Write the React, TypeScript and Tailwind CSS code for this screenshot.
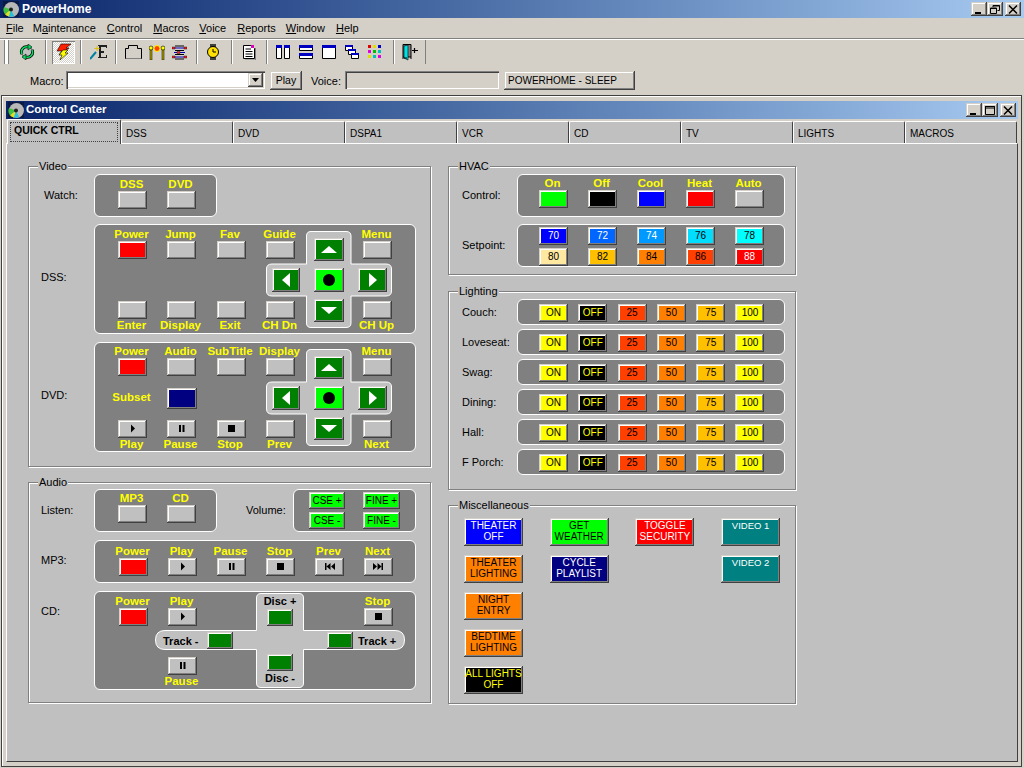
import type { ReactNode } from "react";

const raised =
  "shadow-[inset_-1px_-1px_0_#404040,inset_1px_1px_0_#d4d0c8,inset_-2px_-2px_0_#808080,inset_2px_2px_0_#fff]";
const sunken =
  "shadow-[inset_1px_1px_0_#808080,inset_2px_2px_0_#404040,inset_-1px_-1px_0_#fff,inset_-2px_-2px_0_#d4d0c8]";
const gray = "h-[18px] w-[29px] bg-[#c0c0c0]";
const red = "h-[18px] w-[29px] bg-[#ff0000]";
const green = "h-[24px] w-[29px] bg-[#008000]";
const panel = "rounded-[6px] border border-white bg-[#808080]";

function Btn({ className, children }: { className: string; children?: ReactNode }) {
  return (
    <button className={`flex shrink-0 items-center justify-center ${raised} ${className}`}>
      {children}
    </button>
  );
}

function Top({ label, children }: { label: string; children: ReactNode }) {
  return (
    <div className="flex flex-col items-center">
      <span className="h-[14px] whitespace-nowrap pr-[2px] text-[11.5px] font-bold leading-[14px] text-[#ffff00]">
        {label}
      </span>
      {children}
    </div>
  );
}

function Under({ label, children }: { label: string; children: ReactNode }) {
  return (
    <div className="flex flex-col items-center">
      {children}
      <span className="mt-[-1px] h-[14px] whitespace-nowrap pr-[2px] text-[11.5px] font-bold leading-[14px] text-[#ffff00]">
        {label}
      </span>
    </div>
  );
}

function Group({ title, className, children }: { title: string; className: string; children: ReactNode }) {
  return (
    <fieldset className={`relative min-w-0 border border-[#808080] shadow-[1px_1px_0_#fff,inset_1px_1px_0_#fff] ${className}`}>
      <span className="absolute left-[9px] top-[-8px] bg-[#c0c0c0] px-[1px] leading-[14px]">{title}</span>
      {children}
    </fieldset>
  );
}

function Glyph({ d }: { d: string }) {
  return (
    <svg width="13" height="9" viewBox="0 0 13 9" className="mt-[-1px]">
      <path d={d} fill="#000" />
    </svg>
  );
}
const playG = "M5 0.5 L9 4.5 L5 8.5 Z";
const pauseG = "M4 1H6V8H4ZM7.5 1H9.5V8H7.5Z";
const stopG = "M3 1H10V8H3Z";
const prevG = "M2 1H3.5V8H2ZM7.5 1V8L3.5 4.5ZM12 1V8L8 4.5Z";
const nextG = "M1 1L5 4.5L1 8ZM5.5 1L9.5 4.5L5.5 8ZM9.5 1H11V8H9.5Z";

function Pad() {
  return (
    <div className="absolute left-[171px] top-[6px] h-[97px] w-[126px]">
      <svg width="126" height="97" viewBox="0 0 126 97" className="absolute inset-0">
        <path
          d="M45 .5H80Q85 .5 85 5V33H120Q125.5 33 125.5 38V60Q125.5 65 120 65H85V92Q85 96.5 80 96.5H45Q40.5 96.5 40.5 92V65H6Q.5 65 .5 60V38Q.5 33 6 33H40.5V5Q40.5 .5 45 .5Z"
          fill="#c0c0c0"
          stroke="#fff"
        />
      </svg>
      <div className="relative grid grid-cols-[28px_30px_29px] grid-rows-[23px_24px_23px] gap-x-[14px] gap-y-[7px] pl-[6px] pt-[7px]">
        <Btn className="col-start-2 h-[23px] w-[30px] bg-[#008000]">
          <svg width="16" height="7" viewBox="0 0 16 7"><path d="M8 0L16 7H0Z" fill="#fff" /></svg>
        </Btn>
        <Btn className="col-start-1 row-start-2 h-[24px] w-[28px] bg-[#008000]">
          <svg width="8" height="14" viewBox="0 0 8 14"><path d="M8 0V14L0 7Z" fill="#fff" /></svg>
        </Btn>
        <Btn className="col-start-2 row-start-2 h-[24px] w-[30px] bg-[#00ff00]">
          <span className="size-[12px] rounded-full bg-black" />
        </Btn>
        <Btn className={`col-start-3 row-start-2 ${green}`}>
          <svg width="8" height="14" viewBox="0 0 8 14"><path d="M0 0V14L8 7Z" fill="#fff" /></svg>
        </Btn>
        <Btn className="col-start-2 row-start-3 h-[23px] w-[30px] bg-[#008000]">
          <svg width="16" height="7" viewBox="0 0 16 7"><path d="M0 0H16L8 7Z" fill="#fff" /></svg>
        </Btn>
      </div>
    </div>
  );
}

function DiscPad() {
  const disc = "h-[17px] w-[26px] bg-[#008000]";
  const text = "text-[11px] font-bold leading-[14px] whitespace-nowrap";
  return (
    <div className="absolute left-[60px] top-[1px] h-[95px] w-[250px]">
      <svg width="250" height="95" viewBox="0 0 250 95" className="absolute inset-0">
        <path
          d="M106 .5H144Q148.5 .5 148.5 5V37.5H240Q249.5 37.5 249.5 47Q249.5 56.5 240 56.5H148.5V90Q148.5 94.5 144 94.5H106Q101.5 94.5 101.5 90V56.5H10Q.5 56.5 .5 47Q.5 37.5 10 37.5H101.5V5Q101.5 .5 106 .5Z"
          fill="#c0c0c0"
          stroke="#fff"
        />
      </svg>
      <div className="relative flex flex-col pt-[1px]">
        <div className="ml-[101px] flex w-[48px] flex-col items-center">
          <span className={text}>Disc +</span>
          <div className="h-[1px]" />
          <Btn className={disc} />
        </div>
        <div className="mt-[6px] flex items-center pl-[8px]">
          <span className={`w-[44px] ${text}`}>Track -</span>
          <Btn className={disc} />
          <div className="w-[94px]" />
          <Btn className={disc} />
          <span className={`ml-[5px] ${text}`}>Track +</span>
        </div>
        <div className="ml-[101px] mt-[5px] flex w-[48px] flex-col items-center">
          <Btn className={disc} />
          <span className={text}>Disc -</span>
        </div>
      </div>
    </div>
  );
}

function Disc({ size = 16 }: { size?: number }) {
  return (
    <svg width={size} height={size} viewBox="0 0 16 16">
      <rect width="16" height="16" fill="#0a1a40" />
      <circle cx="8.500" cy="8.500" r="7.500" fill="#b8b8b8" />
      <path d="M8 8.500L2 13.500A7.500 7.500 0 0 1 1 6Z" fill="#40c040" />
      <path d="M8 8.500L6 15.500A7.500 7.500 0 0 1 2 13.500Z" fill="#e0e020" />
      <path d="M8 8.500L11 15A7.500 7.500 0 0 1 6 15.500Z" fill="#20c0e0" />
      <circle cx="8" cy="8.500" r="2" fill="#202020" />
    </svg>
  );
}

function Tool({ children }: { children: ReactNode }) {
  return <span className="flex w-[23px] shrink-0 items-center justify-center">{children}</span>;
}

function Sep() {
  return <span className="h-[24px] w-[2px] shrink-0 border-l border-r border-l-[#808080] border-r-white" />;
}

function Toolbar() {
  return (
    <div className="flex h-[24px] items-center pl-[4px]">
      <span className="h-[24px] w-[5px] border-x border-x-[#808080] bg-white" />
      <div className="flex w-[36px] justify-center">
        <Tool>
          <svg width="16" height="16" viewBox="0 0 16 16">
            <circle cx="8" cy="8" r="5.500" fill="#c0c0c0" stroke="#404040" />
            <path d="M3 10A5 5 0 0 1 9 3" fill="none" stroke="#000" strokeWidth="3" />
            <path d="M3 10A5 5 0 0 1 9 3" fill="none" stroke="#00e060" strokeWidth="1.500" />
            <path d="M13 6A5 5 0 0 1 7 13" fill="none" stroke="#000" strokeWidth="3" />
            <path d="M13 6A5 5 0 0 1 7 13" fill="none" stroke="#00e060" strokeWidth="1.500" />
            <path d="M9 0V6L13 3ZM7 10V16L3 13Z" fill="#00e060" stroke="#000" strokeWidth=".6" />
          </svg>
        </Tool>
      </div>
      <Sep />
      <div className="flex w-[33px] justify-center">
        <span className="flex h-[23px] w-[23px] items-center justify-center bg-[repeating-conic-gradient(#fff_0_25%,#d4d0c8_0_50%)] bg-[length:2px_2px] shadow-[inset_1px_1px_0_#808080,inset_-1px_-1px_0_#fff]">
          <svg width="16" height="18" viewBox="0 0 16 18">
            <path d="M5 1H15L10 5H13L3 12L6 8H1Z" fill="#ff2000" stroke="#000" strokeWidth=".6" />
            <path d="M7 7H12L9 10H12L4 17L6 12H3Z" fill="#ffff00" stroke="#000" strokeWidth=".6" />
          </svg>
        </span>
      </div>
      <Sep />
      <div className="flex w-[33px] justify-center">
        <Tool>
          <svg width="18" height="16" viewBox="0 0 18 16">
            <path d="M8 1H17V4H16V3H11V7H14V9H11V13H16V11H17V14H8V13H9V2H8Z" fill="#202020" />
            <path d="M0 15L6 8" stroke="#0080a0" strokeWidth="2" />
            <path d="M7 2V7M4.500 4.500H9.500" stroke="#e0c000" />
          </svg>
        </Tool>
      </div>
      <Sep />
      <div className="flex w-[79px] justify-center">
        <Tool>
          <svg width="17" height="14" viewBox="0 0 17 14">
            <path d="M.5 13.500V3.500H3.500V.5H12.500V3.500H16.500V13.500Z" fill="#d4d0c8" stroke="#000" />
            <path d="M1 13.500H16" stroke="#808080" />
          </svg>
        </Tool>
        <Tool>
          <svg width="16" height="15" viewBox="0 0 16 15">
            <path d="M1 3H3V15H1ZM13 3H15V15H13Z" fill="#b0a000" stroke="#000" strokeWidth=".5" />
            <circle cx="2" cy="3" r="2" fill="#ffff00" stroke="#000" strokeWidth=".6" />
            <circle cx="14" cy="3" r="2" fill="#ffff00" stroke="#000" strokeWidth=".6" />
            <circle cx="8" cy="3.500" r="3" fill="#ff4000" stroke="#ffff00" />
          </svg>
        </Tool>
        <Tool>
          <svg width="15" height="15" viewBox="0 0 15 15">
            <path d="M2 3H13M2 7.500H13M2 12H13" stroke="#0000c0" strokeWidth="1" />
            <path d="M3 1H12M3 5.500H12M3 9.500H12M3 14H12" stroke="#000" />
            <path d="M0 2H3V4H0ZM12 2H15V4H12ZM0 11H3V13H0ZM12 11H15V13H12ZM5 6.500H8V8.500H5Z" fill="#ff2020" stroke="#000" strokeWidth=".4" />
          </svg>
        </Tool>
      </div>
      <Sep />
      <div className="flex w-[33px] justify-center pr-[3px]">
        <Tool>
          <svg width="14" height="16" viewBox="0 0 14 16">
            <path d="M4 0H10V3H4ZM4 13H10V16H4Z" fill="#404040" />
            <circle cx="7" cy="8" r="5.500" fill="#ffe000" stroke="#000" />
            <path d="M7 5V8H10" stroke="#000" fill="none" />
          </svg>
        </Tool>
      </div>
      <Sep />
      <div className="flex w-[33px] justify-center pr-[1px]">
        <Tool>
          <svg width="13" height="15" viewBox="0 0 13 15">
            <path d="M.5 .5H8.500L11.500 3.500V13.500H.5Z" fill="#fff" stroke="#000" />
            <path d="M2.500 4H8M2.500 6.500H9.500M2.500 9H9.500M2.500 11.500H9.500" stroke="#000" />
            <path d="M8 0H11V3H8Z" fill="#e000c0" />
            <path d="M12.500 3V15H2" stroke="#808080" fill="none" />
          </svg>
        </Tool>
      </div>
      <Sep />
      <div className="flex w-[125px] justify-center pr-[3px]">
        <Tool>
          <svg width="14" height="14" viewBox="0 0 14 14">
            <path d="M.5 .5H5.500V13.500H.5ZM8.500 .5H13.500V13.500H8.500Z" fill="#fff" stroke="#000" />
            <path d="M0 0H6V3H0ZM8 0H14V3H8Z" fill="#0000c0" />
          </svg>
        </Tool>
        <Tool>
          <svg width="14" height="14" viewBox="0 0 14 14">
            <path d="M.5 .5H13.500V5.500H.5ZM.5 8.500H13.500V13.500H.5Z" fill="#fff" stroke="#000" />
            <path d="M0 0H14V3H0ZM0 8H14V11H0Z" fill="#0000c0" />
          </svg>
        </Tool>
        <Tool>
          <svg width="14" height="14" viewBox="0 0 14 14">
            <path d="M.5 .5H13.500V13.500H.5Z" fill="#fff" stroke="#000" />
            <path d="M0 0H14V3H0Z" fill="#0000c0" />
          </svg>
        </Tool>
        <Tool>
          <svg width="14" height="14" viewBox="0 0 14 14">
            <path d="M.5 .5H7.500V5.500H.5ZM3.500 4.500H10.500V9.500H3.500ZM6.500 8.500H13.500V13.500H6.500Z" fill="#fff" stroke="#000" />
            <path d="M0 0H8V2H0ZM3 4H11V6H3ZM6 8H14V10H6Z" fill="#0000c0" />
          </svg>
        </Tool>
        <Tool>
          <svg width="14" height="14" viewBox="0 0 14 14">
            <path d="M0 0H3V3H0Z" fill="#e00000" />
            <path d="M5 0H8V3H5Z" fill="#e0e000" />
            <path d="M10 0H13V3H10Z" fill="#0000c0" />
            <path d="M0 5H3V8H0Z" fill="#e000e0" />
            <path d="M5 5H8V8H5Z" fill="#00c000" />
            <path d="M10 5H13V8H10Z" fill="#00c0c0" />
            <path d="M0 10H3V13H0Z" fill="#e0e000" />
            <path d="M5 10H8V13H5Z" fill="#00c0c0" />
            <path d="M10 10H13V13H10Z" fill="#e000e0" />
          </svg>
        </Tool>
      </div>
      <Sep />
      <div className="flex w-[30px] justify-center pr-[1px]">
        <Tool>
          <svg width="16" height="17" viewBox="0 0 16 17">
            <path d="M1 .5H9V13H1Z" fill="#808080" stroke="#000" />
            <path d="M2 2L6 1V16L2 14Z" fill="#00e0e0" stroke="#000" strokeWidth=".6" />
            <path d="M0 14H5M8 14H10" stroke="#000" />
            <path d="M10 6.500H16M12.500 4V9" stroke="#000" strokeWidth="1.200" />
          </svg>
        </Tool>
      </div>
      <span className="h-[24px] w-px bg-[#808080]" />
    </div>
  );
}

function WinBtn({ kind }: { kind: "min" | "restore" | "max" | "close" }) {
  return (
    <span className={`flex h-[14px] w-[16px] items-center justify-center bg-[#d4d0c8] ${raised}`}>
      <svg width="10" height="9" viewBox="0 0 10 9">
        {kind === "min" && <path d="M1 7H7V9H1Z" fill="#000" />}
        {kind === "max" && <path d="M.5 .5H9.500V8.500H.5ZM0 0H10V2H0Z" fill="none" stroke="#000" />}
        {kind === "restore" && (
          <path d="M3 2V.5H9.500V5.500H7.500M.5 3H6.500V8.500H.5ZM.5 3.500H6.500M3 1H9.500" fill="none" stroke="#000" />
        )}
        {kind === "close" && <path d="M1 .5L9 8.500M9 .5L1 8.500" stroke="#000" strokeWidth="1.500" />}
      </svg>
    </span>
  );
}

const menus = [
  ["", "F", "ile", "mr-[-2px]"],
  ["M", "a", "intenance", ""],
  ["", "C", "ontrol", ""],
  ["", "M", "acros", "mr-[-1px]"],
  ["", "V", "oice", ""],
  ["", "R", "eports", "mr-[-1px]"],
  ["", "W", "indow", ""],
  ["", "H", "elp", ""],
];

const tabs = ["DSS", "DVD", "DSPA1", "VCR", "CD", "TV", "LIGHTS", "MACROS"];

const setpoints = [
  ["70", "bg-[#0000ff] text-white"],
  ["72", "bg-[#0066ff] text-white"],
  ["74", "bg-[#0099ff] text-white"],
  ["76", "bg-[#00ddff] text-black"],
  ["78", "bg-[#00ffff] text-black"],
  ["80", "bg-[#ffe8a0] text-black"],
  ["82", "bg-[#ffc000] text-black"],
  ["84", "bg-[#ff8000] text-black"],
  ["86", "bg-[#ff4000] text-black"],
  ["88", "bg-[#ff0000] text-white"],
];

const levels = [
  ["ON", "bg-[#ffff00] text-black"],
  ["OFF", "bg-black text-[#ffff00]"],
  ["25", "bg-[#ff4000] text-black"],
  ["50", "bg-[#ff8000] text-black"],
  ["75", "bg-[#ffc000] text-black"],
  ["100", "bg-[#ffff00] text-black"],
];

const rooms = ["Couch:", "Loveseat:", "Swag:", "Dining:", "Hall:", "F Porch:"];

const misc = [
  ["THEATER\nOFF", "bg-[#0000ff] text-white"],
  ["GET\nWEATHER", "bg-[#00ff00] text-black"],
  ["TOGGLE\nSECURITY", "bg-[#ff0000] text-white"],
  ["VIDEO 1", "bg-[#008080] text-white items-start pt-[2px] text-[9.5px]"],
  ["THEATER\nLIGHTING", "bg-[#ff8000] text-black"],
  ["CYCLE\nPLAYLIST", "bg-[#000080] text-white"],
  ["VIDEO 2", "col-start-4 bg-[#008080] text-white items-start pt-[2px] text-[9.5px]"],
  ["NIGHT\nENTRY", "col-start-1 bg-[#ff8000] text-black"],
  ["BEDTIME\nLIGHTING", "col-start-1 bg-[#ff8000] text-black"],
  ["ALL LIGHTS\nOFF", "col-start-1 bg-black text-[#ffff00]"],
];

export default function App() {
  return (
    <div className="flex h-[768px] w-[1024px] flex-col overflow-hidden bg-[#d4d0c8] font-['Liberation_Sans',sans-serif] text-[11px] text-black">
      <div className="flex h-[18px] shrink-0 items-center bg-gradient-to-r from-[#0a246a] to-[#a6caf0] pl-[3px] pr-[3px]">
        <Disc />
        <span className="ml-[3px] text-[12px] font-bold text-white">PowerHome</span>
        <div className="ml-auto flex">
          <WinBtn kind="min" />
          <WinBtn kind="restore" />
          <span className="w-[2px]" />
          <WinBtn kind="close" />
        </div>
      </div>

      <nav className="flex h-[20px] shrink-0 items-center gap-[11px] pl-[6px]">
        {menus.map(([before, key, after, adjust]) => (
          <span key={before + key + after} className={adjust}>
            {before}
            <span className="underline">{key}</span>
            {after}
          </span>
        ))}
      </nav>
      <div className="h-[2px] shrink-0 border-b border-t border-b-white border-t-[#808080]" />

      <Toolbar />

      <div className="flex h-[31px] shrink-0 items-start pl-[30px] pt-[7px]">
        <span className="w-[36px] pt-[2px]">Macro:</span>
        <div className={`flex h-[18px] w-[199px] items-center justify-end bg-white pr-[2px] ${sunken}`}>
          <span className={`flex h-[14px] w-[15px] items-center justify-center bg-[#d4d0c8] ${raised}`}>
            <svg width="7" height="4" viewBox="0 0 7 4"><path d="M0 0H7L3.500 4Z" fill="#000" /></svg>
          </span>
        </div>
        <Btn className="ml-[5px] h-[19px] w-[32px] bg-[#d4d0c8] text-[10.5px]">Play</Btn>
        <span className="ml-[9px] w-[34px] pt-[2px]">Voice:</span>
        <div className={`h-[18px] w-[154px] bg-[#d4d0c8] ${sunken}`} />
        <Btn className="ml-[5px] h-[19px] w-[131px] !justify-start bg-[#d4d0c8] pl-[4px] text-[10px]">POWERHOME - SLEEP</Btn>
      </div>

      <div className="ml-[1px] flex h-[672px] w-[1021px] shrink-0 flex-col border border-[#404040] pb-[4px] pl-[4px] pr-[3px] pt-[5px] shadow-[inset_1px_1px_0_#fff]">
        <div className="flex h-[18px] shrink-0 items-center bg-gradient-to-r from-[#0a246a] to-[#a6caf0] pl-[2px] pr-[2px]">
          <Disc />
          <span className="ml-[2px] text-[11.5px] font-bold text-white">Control Center</span>
          <div className="ml-auto flex">
            <WinBtn kind="min" />
            <WinBtn kind="max" />
            <span className="w-[2px]" />
            <WinBtn kind="close" />
          </div>
        </div>

        <div className="relative z-10 -mb-px flex h-[25px] shrink-0 items-end pl-[1px]">
          <div className="flex h-[25px] w-[114px] rounded-t-[2px] border-l border-r border-t border-l-white border-r-[#404040] border-t-white bg-[#c0c0c0] p-[2px] pb-[1px]">
            <span className="flex h-[20px] w-full items-start border border-dotted border-[#404040] pl-[3px] text-[10.5px] font-bold leading-[14px]">
              QUICK CTRL
            </span>
          </div>
          {tabs.map((t) => (
            <div
              key={t}
              className="mb-px flex h-[22px] w-[112px] items-center rounded-t-[2px] border-l border-r border-t border-l-white border-r-[#404040] border-t-white bg-[#c0c0c0] pl-[4px] pt-[1px] text-[10px]"
            >
              {t}
            </div>
          ))}
        </div>

        <div className="flex min-h-0 flex-1 gap-[17px] border border-b-[#404040] border-l-white border-r-[#404040] border-t-white bg-[#c0c0c0] pl-[21px] pt-[22px]">
          <div className="flex w-[403px] flex-col gap-[15px]">
            <Group title="Video" className="h-[301px] pt-[7px]">
              <div className="flex items-center">
                <span className="w-[65px] pl-[15px]">Watch:</span>
                <div className={`grid h-[43px] w-[123px] grid-cols-[49px_49px] pl-[13px] pt-[2px] ${panel}`}>
                  <Top label="DSS"><Btn className={gray} /></Top>
                  <Top label="DVD"><Btn className={gray} /></Top>
                </div>
              </div>

              <div className="mt-[7px] flex items-center">
                <span className="mt-[-4px] w-[65px] pl-[12px]">DSS:</span>
                <div className={`relative grid h-[110px] w-[322px] grid-cols-[49px_49px_50px_49px_48px_49px] grid-rows-[32px_42px_32px] pl-[13px] pt-[2px] ${panel}`}>
                  <Top label="Power"><Btn className={red} /></Top>
                  <Top label="Jump"><Btn className={gray} /></Top>
                  <Top label="Fav"><Btn className={gray} /></Top>
                  <Top label="Guide"><Btn className={gray} /></Top>
                  <div className="col-start-6"><Top label="Menu"><Btn className={gray} /></Top></div>
                  <div className="col-start-1 row-start-3"><Under label="Enter"><Btn className={gray} /></Under></div>
                  <div className="row-start-3"><Under label="Display"><Btn className={gray} /></Under></div>
                  <div className="row-start-3"><Under label="Exit"><Btn className={gray} /></Under></div>
                  <div className="row-start-3"><Under label="CH Dn"><Btn className={gray} /></Under></div>
                  <div className="col-start-6 row-start-3"><Under label="CH Up"><Btn className={gray} /></Under></div>
                  <Pad />
                </div>
              </div>

              <div className="mt-[8px] flex items-center">
                <span className="mt-[-4px] w-[65px] pl-[12px]">DVD:</span>
                <div className={`relative grid h-[110px] w-[322px] grid-cols-[49px_49px_50px_49px_48px_49px] grid-rows-[32px_44px_31px] pl-[13px] pt-[1px] ${panel}`}>
                  <Top label="Power"><Btn className={red} /></Top>
                  <Top label="Audio"><Btn className={gray} /></Top>
                  <Top label="SubTitle"><Btn className={gray} /></Top>
                  <Top label="Display"><Btn className={gray} /></Top>
                  <div className="col-start-6"><Top label="Menu"><Btn className={gray} /></Top></div>
                  <span className="col-start-1 row-start-2 mt-[-1px] self-center pr-[2px] text-center text-[11.5px] font-bold text-[#ffff00]">Subset</span>
                  <div className="col-start-2 row-start-2 flex justify-center self-center"><Btn className="h-[21px] w-[30px] bg-[#000080]" /></div>
                  <div className="col-start-1 row-start-3"><Under label="Play"><Btn className={gray}><Glyph d={playG} /></Btn></Under></div>
                  <div className="row-start-3"><Under label="Pause"><Btn className={gray}><Glyph d={pauseG} /></Btn></Under></div>
                  <div className="row-start-3"><Under label="Stop"><Btn className={gray}><Glyph d={stopG} /></Btn></Under></div>
                  <div className="row-start-3"><Under label="Prev"><Btn className={gray} /></Under></div>
                  <div className="col-start-6 row-start-3"><Under label="Next"><Btn className={gray} /></Under></div>
                  <Pad />
                </div>
              </div>
            </Group>

            <Group title="Audio" className="h-[221px] pt-[6px]">
              <div className="flex items-center">
                <span className="w-[65px] pl-[12px]">Listen:</span>
                <div className={`grid h-[43px] w-[123px] grid-cols-[49px_49px] pl-[13px] pt-[1px] ${panel}`}>
                  <Top label="MP3"><Btn className={gray} /></Top>
                  <Top label="CD"><Btn className={gray} /></Top>
                </div>
                <span className="w-[76px] pl-[29px]">Volume:</span>
                <div className={`grid h-[43px] w-[123px] grid-cols-[54px_37px] grid-rows-[17px_17px] gap-y-[3px] pl-[15px] pt-[2px] text-[10px] ${panel}`}>
                  <Btn className="h-[17px] w-[36px] bg-[#00ff00] pb-[1px]">CSE +</Btn>
                  <Btn className="h-[17px] w-[37px] bg-[#00ff00] pb-[1px]">FINE +</Btn>
                  <Btn className="h-[17px] w-[36px] bg-[#00ff00] pb-[1px]">CSE -</Btn>
                  <Btn className="h-[17px] w-[37px] bg-[#00ff00] pb-[1px]">FINE -</Btn>
                </div>
              </div>

              <div className="mt-[8px] flex items-center">
                <span className="mt-[-2px] w-[65px] pl-[12px]">MP3:</span>
                <div className={`grid h-[43px] w-[322px] grid-cols-[repeat(6,49px)] pl-[14px] pt-[3px] ${panel}`}>
                  <Top label="Power"><Btn className={red} /></Top>
                  <Top label="Play"><Btn className={gray}><Glyph d={playG} /></Btn></Top>
                  <Top label="Pause"><Btn className={gray}><Glyph d={pauseG} /></Btn></Top>
                  <Top label="Stop"><Btn className={gray}><Glyph d={stopG} /></Btn></Top>
                  <Top label="Prev"><Btn className={gray}><Glyph d={prevG} /></Btn></Top>
                  <Top label="Next"><Btn className={gray}><Glyph d={nextG} /></Btn></Top>
                </div>
              </div>

              <div className="mt-[8px] flex items-start">
                <span className="mt-[12px] w-[65px] pl-[12px]">CD:</span>
                <div className={`relative grid h-[99px] w-[322px] grid-cols-[repeat(6,49px)] grid-rows-[32px_31px_33px] pl-[14px] pt-[2px] ${panel}`}>
                  <Top label="Power"><Btn className={red} /></Top>
                  <Top label="Play"><Btn className={gray}><Glyph d={playG} /></Btn></Top>
                  <div className="col-start-6"><Top label="Stop"><Btn className={gray}><Glyph d={stopG} /></Btn></Top></div>
                  <div className="col-start-2 row-start-3"><Under label="Pause"><Btn className={gray}><Glyph d={pauseG} /></Btn></Under></div>
                  <DiscPad />
                </div>
              </div>
            </Group>
          </div>

          <div className="flex w-[348px] flex-col">
            <Group title="HVAC" className="h-[109px] pt-[7px]">
              <div className="flex items-center">
                <span className="w-[68px] pl-[13px]">Control:</span>
                <div className={`grid h-[43px] w-[268px] grid-cols-[repeat(5,49px)] pl-[11px] pt-[1px] ${panel}`}>
                  <Top label="On"><Btn className="h-[18px] w-[29px] bg-[#00ff00]" /></Top>
                  <Top label="Off"><Btn className="h-[18px] w-[29px] bg-black" /></Top>
                  <Top label="Cool"><Btn className="h-[18px] w-[29px] bg-[#0000ff]" /></Top>
                  <Top label="Heat"><Btn className={red} /></Top>
                  <Top label="Auto"><Btn className={gray} /></Top>
                </div>
              </div>
              <div className="mt-[7px] flex items-center">
                <span className="w-[68px] pl-[13px]">Setpoint:</span>
                <div className={`grid h-[43px] w-[268px] grid-cols-[repeat(5,49px)] gap-y-[2px] pl-[21px] pt-[2px] text-[10px] ${panel}`}>
                  {setpoints.map(([n, c]) => (
                    <Btn key={n} className={`h-[18px] w-[29px] pb-[1px] ${c}`}>{n}</Btn>
                  ))}
                </div>
              </div>
            </Group>

            <Group title="Lighting" className="mt-[16px] h-[199px] pt-[7px]">
              <div className="flex flex-col gap-[4px]">
                {rooms.map((room) => (
                  <div key={room} className="flex items-center">
                    <span className="w-[68px] pl-[13px]">{room}</span>
                    <div className={`grid h-[26px] w-[268px] grid-cols-[repeat(6,39.3px)] items-center pl-[21px] pt-[2px] text-[10px] ${panel}`}>
                      {levels.map(([l, c]) => (
                        <Btn key={l} className={`h-[18px] w-[29px] pb-[2px] ${c}`}>{l}</Btn>
                      ))}
                    </div>
                  </div>
                ))}
              </div>
            </Group>

            <Group title="Miscellaneous" className="mt-[15px] h-[199px] pl-[15px] pt-[12px]">
              <div className="grid grid-cols-[85.7px_85.7px_85.7px_59px] grid-rows-[repeat(5,28px)] gap-y-[9px] text-[10px]">
                {misc.map(([label, c]) => (
                  <Btn key={label} className={`h-[28px] w-[59px] whitespace-pre pb-[3px] text-center leading-[11px] ${c}`}>
                    {label}
                  </Btn>
                ))}
              </div>
            </Group>
          </div>
        </div>
      </div>
    </div>
  );
}
